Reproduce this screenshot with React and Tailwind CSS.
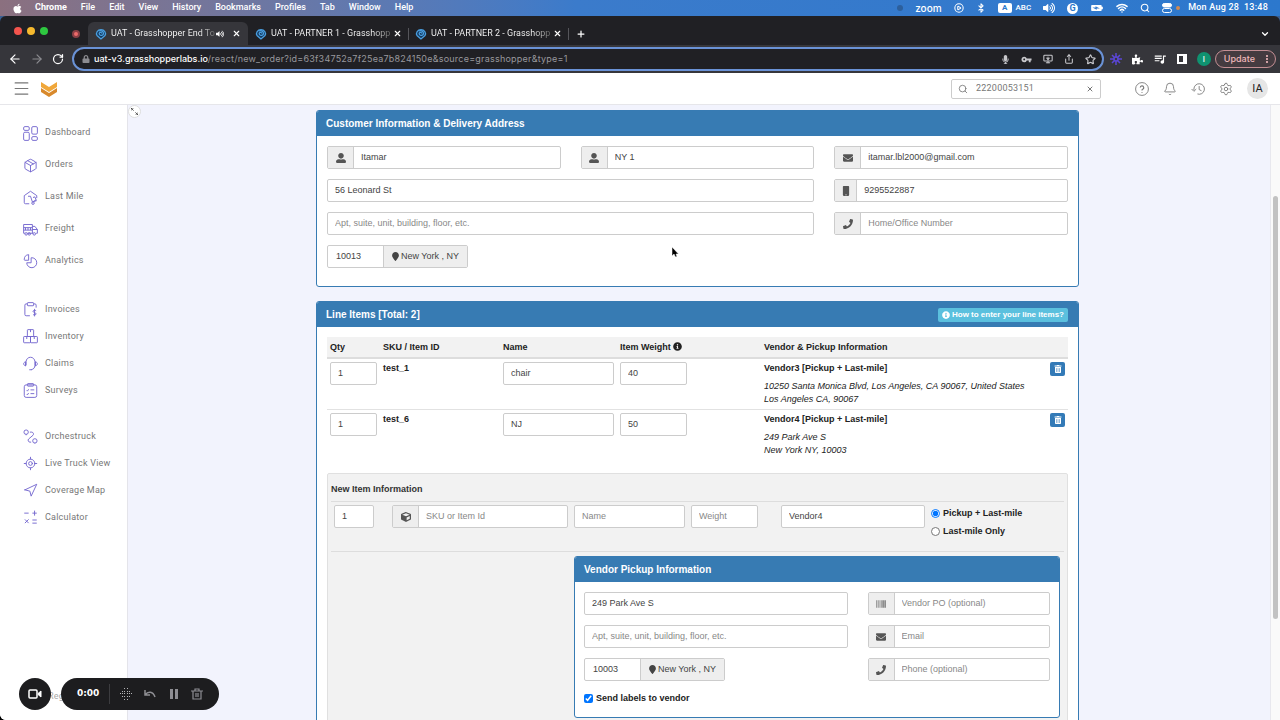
import { useState } from 'react';
import {
  ArrowLeft, ArrowRight, Bell, Bluetooth, ChevronDown, CirclePlay, LocateFixed, Menu,
  MonitorDown, Navigation, Package, Plus, RotateCw, Search, Settings, Share, Star, Wifi, X,
} from 'lucide-react';
import {
  FaApple, FaBarcode, FaCube, FaEnvelope, FaInfoCircle, FaLock, FaMapMarker, FaMicrophone,
  FaMobile, FaPhone, FaPuzzlePiece, FaTrashAlt, FaUserAlt, FaVolumeUp,
} from 'react-icons/fa';
import { MdBatteryChargingFull, MdMoreVert, MdQueueMusic, MdVpnKey } from 'react-icons/md';

const menus = ['File', 'Edit', 'View', 'History', 'Bookmarks', 'Profiles', 'Tab', 'Window', 'Help'];

// Line icons of the side menu, all on a 24 grid
const icons = {
  dashboard: (
    <>
      <rect x="1" y="1" width="9" height="6" rx="2" />
      <rect x="1" y="10" width="9" height="13" rx="2" />
      <rect x="14" y="1" width="9" height="12" rx="2" />
      <rect x="14" y="17" width="9" height="6" rx="2" />
    </>
  ),
  lastMile: (
    <>
      <path d="M10 22H4a2 2 0 0 1-2-2V9l10-7 10 7v4" />
      <path d="M8 10h4l3 9M16 12l3-1 2 5-4 2M15 19l7-2" />
      <circle cx="16" cy="21" r="2" />
    </>
  ),
  freight: (
    <>
      <path d="M1 4h14v14M1 4v14h2M7 18h9M15 7h4l4 5v6h-2M1 9h14M1 13h14M15 12h8M4 9v4M8 9v4M12 9v4" />
      <circle cx="5" cy="19" r="2" />
      <circle cx="18" cy="19" r="2" />
      <circle cx="10" cy="19" r="2" />
    </>
  ),
  analytics: (
    <>
      <path d="M9 1a8 8 0 0 0-7 8 1 1 0 0 0 1 1h6V1z" />
      <path d="M13 6v8H6a8 8 0 1 0 7-8z" />
    </>
  ),
  invoices: (
    <>
      <path d="M11 22H5a2 2 0 0 1-2-2V5a2 2 0 0 1 2-2h2M17 3h2a2 2 0 0 1 2 2v4" />
      <rect x="7" y="1" width="10" height="5" rx="1" />
      <path d="M21 14c-1-1-5-1-5 1s5 2 5 4-4 2-5 1M18.500 11v12" />
    </>
  ),
  inventory: (
    <>
      <rect x="7" y="1" width="10" height="11" rx="1" />
      <rect x="1" y="12" width="11" height="10" rx="1" />
      <rect x="12" y="12" width="11" height="10" rx="1" />
      <path d="M12 1v4M6 12v4M18 12v4" />
    </>
  ),
  claims: (
    <>
      <path d="M5 15V9a7 7 0 0 1 14 0v6c0 4-2 6-6 7M10 22h4" />
      <path d="M4 9c-4 2-4 5 0 7zM20 9c4 2 4 5 0 7z" />
    </>
  ),
  surveys: (
    <>
      <rect x="2" y="3" width="20" height="20" rx="3" />
      <rect x="7" y="1" width="10" height="4" rx="1" />
      <path d="m6 12 1 1 2-3M12 11h6M6 18l1 1 2-3M12 17h6" />
    </>
  ),
  orchestruck: (
    <>
      <circle cx="5" cy="5" r="3.500" />
      <circle cx="19" cy="19" r="3.500" />
      <path d="M11 5h3a3 3 0 0 1 2 5l-7 6a3 3 0 0 0 2 5h2" />
      <path d="M5 8v2M19 22v1" />
    </>
  ),
  calculator: <path d="M2 5h7M15 5h7M18.500 1v8M3 15l6 6M9 15l-6 6M15 16h7M15 21h7" />,
};

const navGroups = [
  {
    row: 'h-8',
    links: [
      { label: 'Dashboard', icon: icons.dashboard },
      { label: 'Orders', lucide: Package },
      { label: 'Last Mile', icon: icons.lastMile },
      { label: 'Freight', icon: icons.freight },
      { label: 'Analytics', icon: icons.analytics },
    ],
  },
  {
    row: 'h-[27px]',
    links: [
      { label: 'Invoices', icon: icons.invoices },
      { label: 'Inventory', icon: icons.inventory },
      { label: 'Claims', icon: icons.claims },
      { label: 'Surveys', icon: icons.surveys },
    ],
  },
  {
    row: 'h-[27px]',
    links: [
      { label: 'Orchestruck', icon: icons.orchestruck },
      { label: 'Live Truck View', lucide: LocateFixed },
      { label: 'Coverage Map', lucide: Navigation },
      { label: 'Calculator', icon: icons.calculator },
    ],
  },
];

const lineItems = [
  {
    qty: '1', sku: 'test_1', name: 'chair', weight: '40', vendor: 'Vendor3 [Pickup + Last-mile]',
    address: '10250 Santa Monica Blvd, Los Angeles, CA 90067, United States', city: 'Los Angeles CA, 90067',
  },
  {
    qty: '1', sku: 'test_6', name: 'NJ', weight: '50', vendor: 'Vendor4 [Pickup + Last-mile]',
    address: '249 Park Ave S', city: 'New York NY, 10003',
  },
];

function Favicon() {
  return (
    <svg className="size-3 shrink-0" viewBox="0 0 24 24" fill="none" stroke="#4a9fe0" strokeWidth="2.500">
      <path d="M12 22 4 15a9 8 0 1 1 16 0z" fill="#14385c" />
      <path d="M8 6c5-2 9 1 9 5s-6 5-8 2 1-5 3-4 1 2 1 2" />
    </svg>
  );
}

function Tab({ title, active, playing }) {
  return (
    <div className={`flex h-[23px] w-40 items-center px-[7px] ${active ? 'rounded-t-md bg-[#36363b]' : ''}`}>
      <Favicon />
      <span className="ml-1 flex-1 whitespace-nowrap">
        <span className="bg-linear-to-r from-white from-85% to-[#666] bg-clip-text text-transparent">{title}</span>
      </span>
      {playing && <FaVolumeUp className="mr-2 size-2 shrink-0" />}
      <button type="button" aria-label="Close tab">
        <X className="size-[9px]" strokeWidth={3} />
      </button>
      {!active && <span className="-mr-2 ml-1.5 h-3 w-px bg-[#55555a]" />}
    </div>
  );
}

function MenuBar() {
  return (
    <div className="flex h-4 shrink-0 items-center bg-linear-to-r from-[#8b707f] via-[#3b7bcb] via-45% to-[#2c78cd] px-3 font-['Roboto',sans-serif] text-[9px] font-medium whitespace-nowrap text-white">
      <FaApple className="size-[11px]" />
      <nav className="ml-3 flex flex-1 gap-3.5">
        <b>Chrome</b>
        {menus.map((m) => <span key={m}>{m}</span>)}
      </nav>
      <div className="flex items-center gap-3">
        <span className="size-1.5 rounded-full bg-[#2c5f9c]" />
        <span className="font-['Inter',sans-serif] text-[10px] leading-3">zoom</span>
        <CirclePlay className="size-2.5" strokeWidth={2.5} />
        <Bluetooth className="size-2.5" strokeWidth={2.5} />
        <span className="flex items-center gap-1 text-[8px]">
          <b className="w-3.5 rounded-xs bg-white text-center leading-[10px] text-[#2c78cd]">A</b>
          ABC
        </span>
        <FaVolumeUp className="size-3" />
        <b className="size-[11px] rounded-full bg-white text-center text-[9px] leading-[11px] text-[#2c78cd]">G</b>
        <MdBatteryChargingFull className="size-3.5 rotate-90" />
        <Wifi className="size-3" strokeWidth={3} />
        <Search className="size-2.5" strokeWidth={2.5} />
        <span className="flex items-center gap-1">
          <svg className="size-2.5" viewBox="0 0 10 10" fill="none" stroke="currentColor">
            <rect x="0.500" y="0.500" width="9" height="3.500" rx="1.700" fill="currentColor" />
            <rect x="0.500" y="5.500" width="9" height="4" rx="2" />
          </svg>
          <i className="size-1 rounded-full bg-[#d08a52]" />
        </span>
        <span className="-ml-1 tracking-wide">Mon Aug 28&nbsp; 13:48</span>
      </div>
    </div>
  );
}

function Browser() {
  return (
    <div className="shrink-0 bg-[#3a5f92] text-[9px] font-medium text-white">
      <div className="flex h-[29px] items-end rounded-t-md bg-[#202024] font-['Roboto',sans-serif] font-normal">
        <div className="flex h-[29px] items-center gap-[5px] pl-3.5">
          <span className="size-2 rounded-full bg-[#f4544d]" />
          <span className="size-2 rounded-full bg-[#f6b92e]" />
          <span className="size-2 rounded-full bg-[#2ec840]" />
        </div>
        <div className="flex h-[23px] w-10 items-center justify-center pl-4">
          <span className="size-2 rounded-full border-2 border-[#8a3f45] bg-[#ef6b6b]" />
        </div>
        <Tab title="UAT - Grasshopper End To" active playing />
        <Tab title="UAT - PARTNER 1 - Grasshopp" />
        <Tab title="UAT - PARTNER 2 - Grasshopp" />
        <button type="button" aria-label="New tab" className="flex h-[23px] items-center pl-2">
          <Plus className="size-2.5" strokeWidth={3} />
        </button>
        <button type="button" aria-label="Search tabs" className="ml-auto flex h-[23px] items-center pr-2.5">
          <ChevronDown className="size-2.5" strokeWidth={3} />
        </button>
      </div>
      <div className="flex h-7 items-center bg-[#36363b] pr-1 pl-2 font-['Inter',sans-serif]">
        <ArrowLeft className="size-3.5" />
        <ArrowRight className="ml-2 size-3.5 text-[#8b8b90]" />
        <RotateCw className="mx-2 size-3" strokeWidth={2.5} />
        <div className="flex h-6 min-w-0 flex-1 items-center rounded-full border-2 border-[#6a92d6] bg-[#202024] pr-1.5 pl-2 text-[#c8c8cc]">
          <FaLock className="size-2 shrink-0 text-[#8b8b90]" />
          <span className="ml-1 flex-1 truncate font-normal text-[#98989d]">
            <span className="font-medium text-white">uat-v3.grasshopperlabs.io</span>
            <span className="tracking-wide">/react/new_order?id=63f34752a7f25ea7b824150e&amp;source=grasshopper&amp;type=1</span>
          </span>
          <span className="flex items-center gap-[11px]">
            <FaMicrophone className="size-[9px]" />
            <MdVpnKey className="size-[11px]" />
            <MonitorDown className="size-2.5" strokeWidth={2.5} />
            <Share className="size-2.5" strokeWidth={2.5} />
            <Star className="size-[11px]" strokeWidth={2.5} />
          </span>
        </div>
        <div className="ml-1.5 flex items-center gap-2.5">
          <svg className="size-3" viewBox="0 0 24 24" stroke="#5b46d8" strokeWidth="3" fill="none">
            <circle cx="12" cy="12" r="4" />
            <path d="M12 0v8M12 16v8M0 12h8M16 12h8M4 4l5 5M15 15l5 5M20 4l-5 5M9 15l-5 5" />
          </svg>
          <FaPuzzlePiece className="size-[11px]" />
          <MdQueueMusic className="size-3.5" />
          <svg className="size-2.5" viewBox="0 0 10 10">
            <path d="M0 0h10v10H0zM2 2v6h4V2z" fill="#fff" fillRule="evenodd" />
          </svg>
          <span className="size-3.5 rounded-full bg-[#0f9270] text-center text-[8px] leading-[14px]">I</span>
        </div>
        <button type="button" className="ml-1 flex h-[18px] items-center gap-1.5 rounded-full border border-[#c48f94] bg-[#443b40] pr-0.5 pl-2 text-[#efb8bb]">
          Update
          <MdMoreVert className="size-3" />
        </button>
      </div>
    </div>
  );
}

function AppHeader() {
  return (
    <header className="flex h-8 shrink-0 items-center border-b border-[#e6e6ea] bg-white px-3 font-['Roboto',sans-serif] text-[#777]">
      <button type="button" aria-label="Menu"><Menu className="size-[19px]" strokeWidth={1.5} /></button>
      <svg className="ml-2.5 size-4" viewBox="0 0 16 16">
        <path d="M0 1v5l8 5 8-5V1L8 6z" fill="#f0a73a" />
        <path d="M0 7v4l8 5 8-5V7l-8 5z" fill="#d8892c" />
      </svg>
      <div className="mr-[34px] ml-auto flex h-5 w-[150px] items-center rounded-xs border border-[#ccc] px-1.5">
        <Search className="size-2.5 shrink-0" />
        <input aria-label="Search orders" defaultValue="22200053151" className="ml-2 w-full min-w-0 text-[9px] tracking-wide outline-none" />
        <button type="button" aria-label="Clear"><X className="size-2" strokeWidth={3} /></button>
      </div>
      <div className="flex items-center gap-3.5">
        <svg className="size-3.5" viewBox="0 0 24 24" fill="none" stroke="currentColor" strokeWidth="1.500">
          <circle cx="12" cy="12" r="11" />
          <path d="M9 9.500a3 3 0 1 1 4 3c-1 .4-1 1-1 2M12 17v1.500" strokeWidth="2" />
        </svg>
        <Bell className="size-3.5" strokeWidth={1.5} />
        <svg className="size-3.5" viewBox="0 0 24 24" fill="none" stroke="currentColor" strokeWidth="1.500">
          <path d="M5 14V12a9 9 0 1 1 6 8.500M1 12l4 4 4-4M14 7v6l4 2" />
        </svg>
        <Settings className="size-3.5" strokeWidth={1.5} />
        <span className="size-[21px] rounded-full bg-[#e6e6e6] text-center text-[11px] leading-[21px] text-[#222]">IA</span>
      </div>
    </header>
  );
}

function Sidebar() {
  return (
    <aside className="flex w-32 shrink-0 flex-col border-r border-[#e4e4ea] bg-white pt-3 font-['Roboto',sans-serif] text-[9px] tracking-wide text-[#777]">
      {navGroups.map((group, i) => (
        <nav key={i} className="mb-[19px] pl-[23px]">
          {group.links.map(({ label, icon, lucide: Icon }) => (
            <a key={label} href="#" className={`flex items-center gap-[7px] ${group.row}`}>
              {Icon ? (
                <Icon className="size-[15px] text-[#7468cf]" strokeWidth={1.5} />
              ) : (
                <svg className="size-[15px]" viewBox="0 0 24 24" fill="none" stroke="#7468cf" strokeWidth="1.500">{icon}</svg>
              )}
              {label}
            </a>
          ))}
        </nav>
      ))}
      <a href="#" className="mt-auto mb-[17px] pl-12 text-[#aaa]">Reg</a>
    </aside>
  );
}

function Field({ label, icon: Icon, iconWidth = 'w-[26px]', value, className = '', width = 'w-full' }) {
  return (
    <div className={`flex h-[23px] overflow-hidden rounded-xs border border-[#ccc] bg-white ${width} ${className}`}>
      {Icon && (
        <span className={`flex shrink-0 items-center justify-center border-r border-[#ccc] bg-[#eee] text-[#555] ${iconWidth}`}>
          <Icon className="size-2.5" />
        </span>
      )}
      <input
        aria-label={label}
        placeholder={label}
        defaultValue={value}
        className="w-full min-w-0 px-[7px] text-[9px] text-[#444] outline-none placeholder:text-[#888]"
      />
    </div>
  );
}

function ZipField({ value, city }) {
  return (
    <div className="flex h-[23px] w-fit rounded-xs border border-[#ccc]">
      <input aria-label="Zip code" defaultValue={value} className="w-[55px] px-2 outline-none" />
      <span className="flex items-center gap-0.5 border-l border-[#ccc] bg-[#eee] px-2">
        <FaMapMarker className="h-[9px] w-[7px]" />
        {city}
      </span>
    </div>
  );
}

function Panel({ title, action, children }) {
  return (
    <section className="overflow-hidden rounded-[3px] border border-[#377bb3] bg-white">
      <header className="flex h-[25px] items-center justify-between bg-[#377bb3] pr-2.5 pl-[9px] text-white">
        <h2 className="text-[10px] font-bold">{title}</h2>
        {action}
      </header>
      {children}
    </section>
  );
}

function LineItems() {
  return (
    <table className="w-full table-fixed text-left">
      <colgroup>
        <col className="w-[53px]" />
        <col className="w-[120px]" />
        <col className="w-[117px]" />
        <col className="w-36" />
        <col />
        <col className="w-[18px]" />
      </colgroup>
      <thead>
        <tr className="h-[21px] border-b-2 border-[#ddd] bg-[#f2f2f2] text-[#222]">
          <th className="px-[3px]">Qty</th>
          <th className="px-[3px]">SKU / Item ID</th>
          <th className="px-[3px]">Name</th>
          <th className="px-[3px]">Item Weight <FaInfoCircle className="mb-0.5 inline size-[9px]" /></th>
          <th className="px-[3px]">Vendor &amp; Pickup Information</th>
          <th aria-label="Actions" />
        </tr>
      </thead>
      <tbody>
        {lineItems.map((item) => (
          <tr key={item.sku} className="h-[51px] border-b border-[#e2e2e2] align-top text-[#222] last:border-0">
            <td className="px-[3px] pt-[3px]"><Field label="Qty" value={item.qty} /></td>
            <td className="px-[3px] pt-[3px] font-bold">{item.sku}</td>
            <td className="px-[3px] pt-[3px]"><Field label="Name" value={item.name} /></td>
            <td className="px-[3px] pt-[3px]"><Field label="Weight" value={item.weight} width="w-[67px]" /></td>
            <td className="px-[3px] pt-[3px]">
              <b>{item.vendor}</b>
              <address className="mt-[5px]">{item.address}<br />{item.city}</address>
            </td>
            <td className="pt-[3px]">
              <button type="button" aria-label={`Delete ${item.sku}`} className="flex h-3.5 w-[15px] items-center justify-center rounded-xs bg-[#337ab7] text-white">
                <FaTrashAlt className="size-2" />
              </button>
            </td>
          </tr>
        ))}
      </tbody>
    </table>
  );
}

function NewItem() {
  const [mode, setMode] = useState('pickup');

  return (
    <div className="mt-[13px] rounded-xs border border-[#e0e0e0] bg-[#f2f2f2] px-[3px] pb-10">
      <h3 className="flex h-[27px] items-center pt-[3px] font-bold text-[#333]">New Item Information</h3>
      <div className="grid h-[51px] grid-cols-[58px_182px_117px_90px_150px_1fr] border-y border-[#ddd] pt-[3px]">
        <div className="px-[3px]"><Field label="Quantity" value="1" width="w-10" /></div>
        <div className="px-[3px]"><Field label="SKU or Item Id" icon={FaCube} /></div>
        <div className="px-[3px]"><Field label="Name" /></div>
        <div className="px-[3px]"><Field label="Weight" width="w-[67px]" /></div>
        <div className="px-[3px]"><Field label="Vendor" value="Vendor4" /></div>
        <div className="px-[3px] font-bold text-[#222]">
          <label className="flex h-4 items-center gap-[3px]">
            <input type="radio" name="mode" className="size-[9px]" checked={mode === 'pickup'} onChange={() => setMode('pickup')} />
            Pickup + Last-mile
          </label>
          <label className="mt-0.5 flex h-4 items-center gap-[3px]">
            <input type="radio" name="mode" className="size-[9px]" checked={mode === 'last'} onChange={() => setMode('last')} />
            Last-mile Only
          </label>
        </div>
      </div>
      <div className="mt-1 mr-1 ml-[243px]">
        <Panel title="Vendor Pickup Information">
          <div className="grid grid-cols-[13fr_9fr] gap-x-5 gap-y-2.5 px-[9px] pt-2.5 pb-3">
            <Field label="Address" value="249 Park Ave S" />
            <Field label="Vendor PO (optional)" icon={FaBarcode} />
            <Field label="Apt, suite, unit, building, floor, etc." />
            <Field label="Email" icon={FaEnvelope} />
            <ZipField value="10003" city="New York , NY" />
            <Field label="Phone (optional)" icon={FaPhone} />
            <label className="flex h-3.5 items-center gap-[3px] font-bold text-[#222]">
              <input type="checkbox" defaultChecked className="size-[9px]" />
              Send labels to vendor
            </label>
          </div>
        </Panel>
      </div>
    </div>
  );
}

function Recorder() {
  return (
    <div className="absolute bottom-2.5 left-[19px] flex gap-2.5">
      <button type="button" aria-label="Camera" className="flex size-8 items-center justify-center rounded-full bg-[#1d1d1f] text-white">
        <svg className="size-3.5" viewBox="0 0 14 14" fill="none" stroke="currentColor" strokeWidth="1.500">
          <rect x="1" y="3" width="8" height="8" rx="1" />
          <path d="M10 6.500 13 4v6l-3-2.500z" fill="currentColor" strokeWidth="1" />
        </svg>
      </button>
      <div className="flex h-8 w-[158px] items-center rounded-full bg-[#1d1d1f] px-4 text-[#8e8e93]">
        <b className="w-8 font-['DejaVu_Sans',sans-serif] text-[9px] text-white">0:00</b>
        <span className="h-5 w-px bg-[#3c3c3f]" />
        <div className="flex flex-1 items-center justify-between pl-2.5">
          <svg className="size-3" viewBox="0 0 12 12" fill="#b5b5b8">
            <path d="M4 0h1v1H4zM7 0h1v1H7zM2 3h1v1H2zM4 3h1v1H4zM7 3h1v1H7zM9 3h1v1H9zM0 5h1v1H0zM2 5h1v1H2zM4 5h1v1H4zM7 5h1v1H7zM9 5h1v1H9zM11 5h1v1h-1zM2 8h1v1H2zM4 8h1v1H4zM7 8h1v1H7zM9 8h1v1H9zM4 11h1v1H4zM7 11h1v1H7z" />
          </svg>
          <svg className="size-3" viewBox="0 0 12 12" fill="none" stroke="currentColor" strokeWidth="1.500">
            <path d="M1 2v5h5M1 7c3-4 8-4 10 2" />
          </svg>
          <svg className="size-2.5" viewBox="0 0 10 10" fill="currentColor">
            <path d="M1 0h3v10H1zM6 0h3v10H6z" />
          </svg>
          <svg className="size-3" viewBox="0 0 12 12" fill="none" stroke="currentColor" strokeWidth="1.200">
            <path d="M0 3h12M4 3V1h4v2M2 3v8h8V3M5 5v4M7 5v4" />
          </svg>
        </div>
      </div>
    </div>
  );
}

export default function App() {
  return (
    <div className="relative flex h-screen flex-col overflow-hidden bg-black">
      <MenuBar />
      <Browser />
      <div className="flex min-h-0 flex-1 flex-col overflow-hidden rounded-bl-md bg-white">
        <AppHeader />
        <div className="flex min-h-0 flex-1">
          <Sidebar />
          <main className="relative min-w-0 flex-1 overflow-hidden bg-[#f2f3fd] pt-[5px] pr-[3px] font-['Liberation_Sans',Arial,sans-serif] text-[9px] leading-[13px] text-[#444]">
            <button type="button" aria-label="Expand" className="absolute top-0 left-0 flex size-[13px] items-center justify-center rounded-full border border-[#ddd] bg-white">
              <svg className="size-[7px]" viewBox="0 0 8 8" fill="none" stroke="#444">
                <path d="M0 3V0h3M0 0l3 3M8 5v3H5M8 8 5 5" />
              </svg>
            </button>
            <div className="mx-auto flex w-full max-w-[763px] flex-col gap-3.5">
              <Panel title="Customer Information & Delivery Address">
                <div className="grid grid-cols-3 gap-x-5 gap-y-2.5 px-2.5 pt-2.5 pb-[18px]">
                  <Field label="First name" icon={FaUserAlt} value="Itamar" />
                  <Field label="Last name" icon={FaUserAlt} value="NY 1" />
                  <Field label="Email" icon={FaEnvelope} value="itamar.lbl2000@gmail.com" />
                  <Field label="Address" value="56 Leonard St" className="col-span-2" />
                  <Field label="Mobile number" icon={FaMobile} iconWidth="w-[22px]" value="9295522887" />
                  <Field label="Apt, suite, unit, building, floor, etc." className="col-span-2" />
                  <Field label="Home/Office Number" icon={FaPhone} />
                  <ZipField value="10013" city="New York , NY" />
                </div>
              </Panel>
              <Panel
                title="Line Items [Total: 2]"
                action={(
                  <button type="button" className="flex h-3.5 items-center gap-0.5 rounded-xs bg-[#5bc0de] px-1 text-[8px] font-bold">
                    <FaInfoCircle className="size-2" />
                    How to enter your line items?
                  </button>
                )}
              >
                <div className="px-2.5 pt-2.5">
                  <LineItems />
                  <NewItem />
                </div>
              </Panel>
            </div>
            <svg className="pointer-events-none absolute top-[141px] left-[543px] h-3 w-2" viewBox="0 0 8 12">
              <path d="M1 1v9l2-2 1.500 3L6 10.500 5 8h2.500z" fill="#000" stroke="#fff" strokeWidth="0.500" />
            </svg>
          </main>
          <div className="w-2.5 shrink-0 border-l border-[#e8e8ee] bg-[#fafafa] pt-[91px] pl-0.5">
            <div className="h-[423px] w-[5px] rounded-full bg-[#c2c2c2]" />
          </div>
        </div>
      </div>
      <Recorder />
    </div>
  );
}
